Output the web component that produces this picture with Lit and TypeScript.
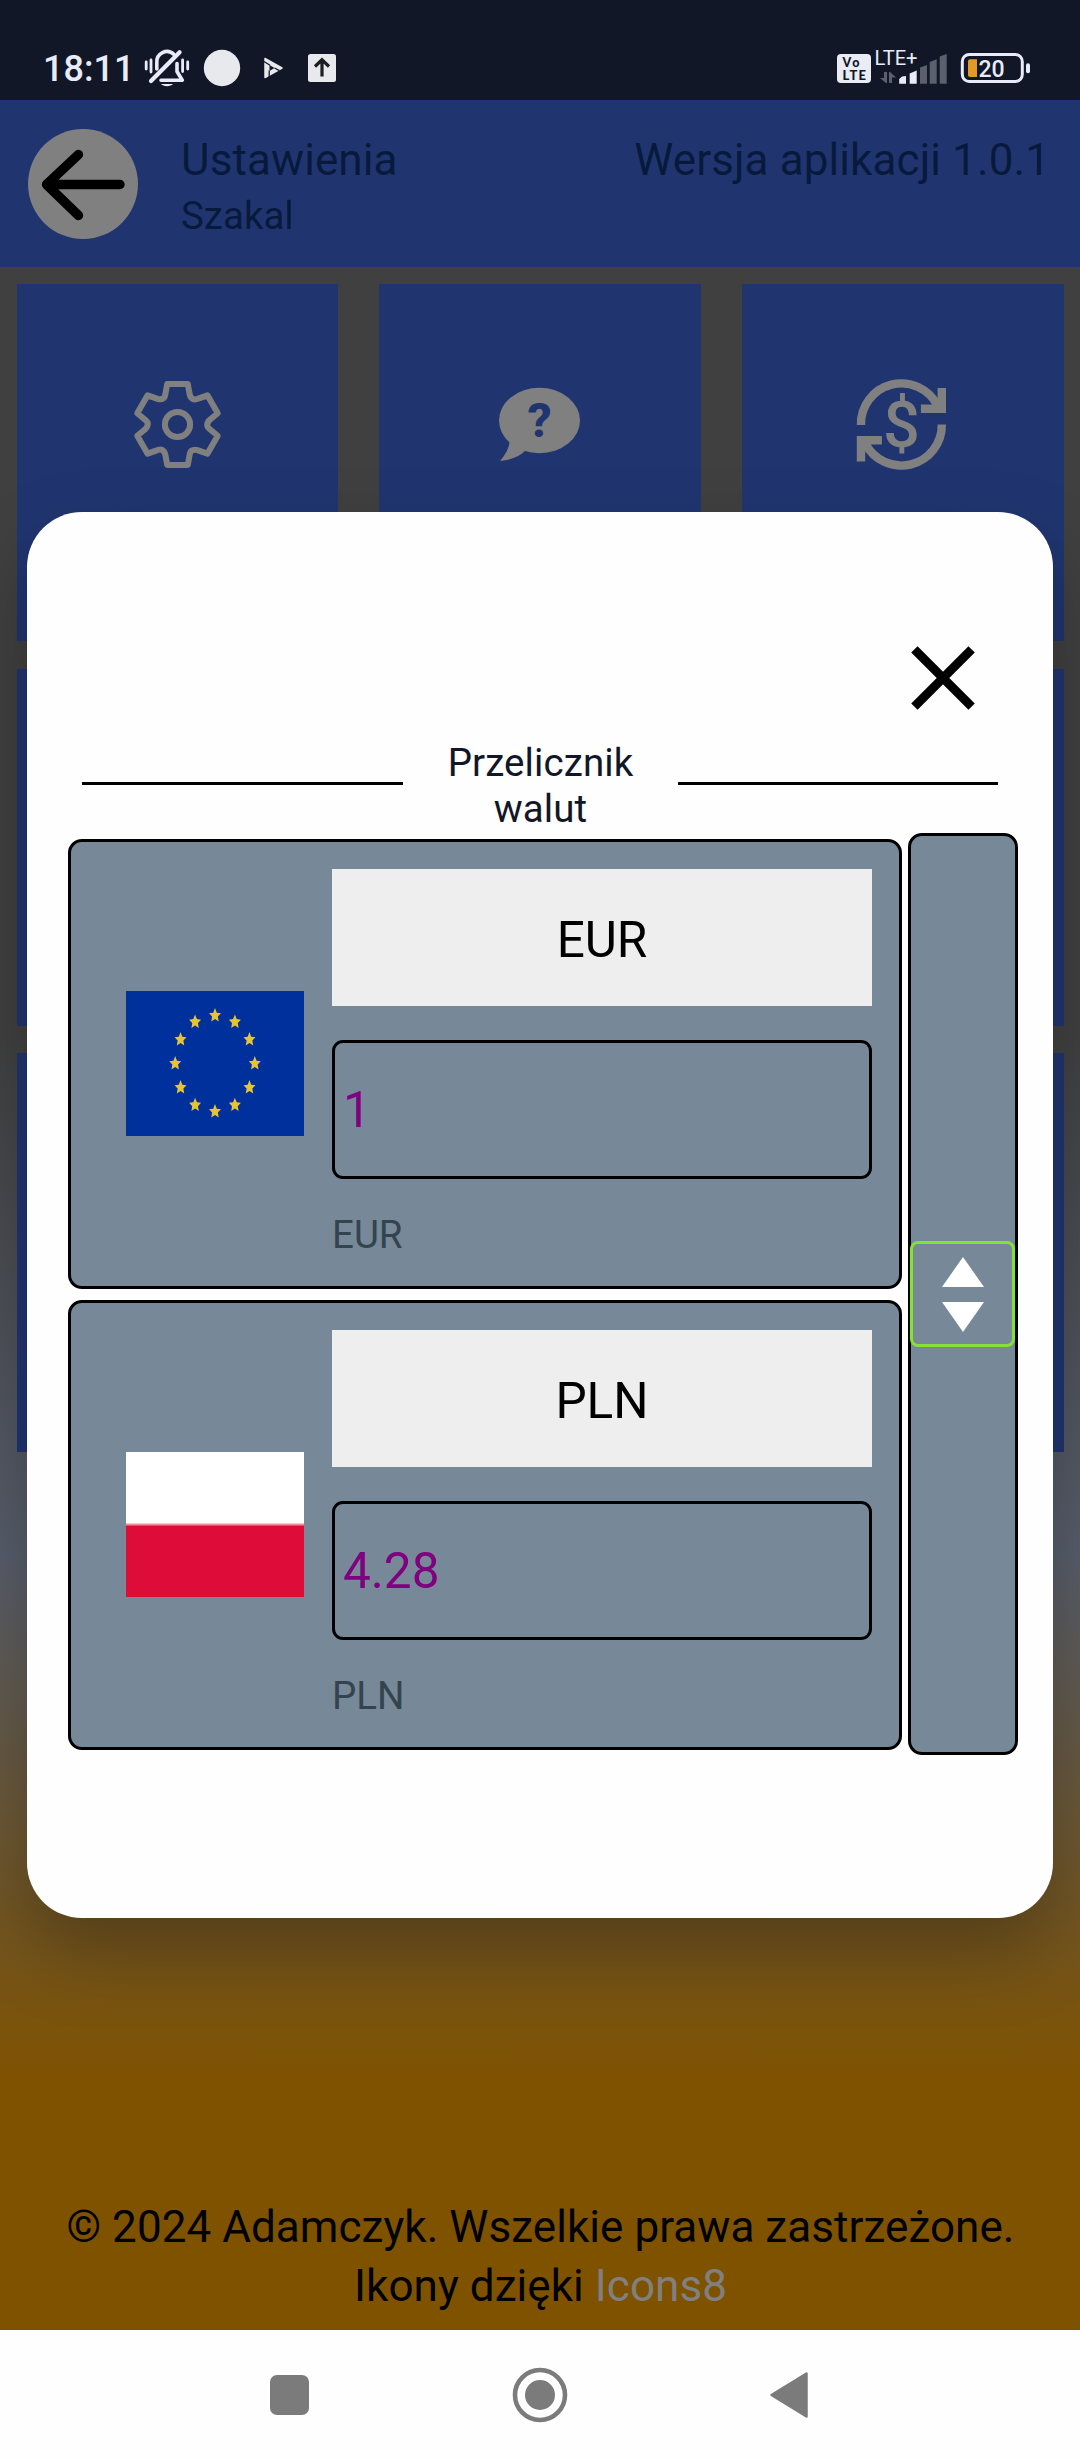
import { LitElement, html, svg, css } from "lit";
import { customElement, property } from "lit/decorators.js";

const star = (cx: number, cy: number, rx: number, ry: number) => {
  const pts: string[] = [];
  for (let i = 0; i < 10; i++) {
    const a = (-90 + i * 36) * (Math.PI / 180);
    const k = i % 2 ? 0.48 : 1;
    pts.push(`${(cx + Math.cos(a) * rx * k).toFixed(2)},${(cy + Math.sin(a) * ry * k).toFixed(2)}`);
  }
  return svg`<polygon points=${pts.join(" ")} fill="#e6c434"></polygon>`;
};

const flags: Record<string, unknown> = {
  EUR: html`<svg class="flag" viewBox="0 0 178 145">
    <rect width="178" height="145" fill="#00309b"></rect>
    ${Array.from({ length: 12 }, (_, i) => {
      const a = (i * 30 * Math.PI) / 180;
      return star(89 + Math.sin(a) * 39.8, 72.5 - Math.cos(a) * 48, 6.3, 7.4);
    })}
  </svg>`,
  PLN: html`<svg class="flag" viewBox="0 0 178 145">
    <rect width="178" height="145" fill="#fff"></rect>
    <rect y="71.5" width="178" height="3" fill="#f0909f"></rect>
    <rect y="73.5" width="178" height="71.5" fill="#dd0c39"></rect>
  </svg>`,
};

@customElement("currency-card")
class CurrencyCard extends LitElement {
  @property() code = "";
  @property() amount = "";

  static styles = css`
    :host {
      box-sizing: border-box;
      display: flex;
      align-items: center;
      gap: 28px;
      height: 450px;
      padding: 0 27px 0 55px;
      border: 3px solid #000;
      border-radius: 14px;
      background: #778899;
    }
    .flag {
      display: block;
      width: 178px;
      height: 145px;
      margin-bottom: 1px;
      flex: none;
    }
    .fields {
      flex: 1;
      height: 390px;
      display: flex;
      flex-direction: column;
    }
    .select {
      box-sizing: border-box;
      height: 137px;
      padding-top: 5px;
      background: #eeeeee;
      color: #000;
      font-size: 49.5px;
      display: flex;
      align-items: center;
      justify-content: center;
    }
    .amount {
      box-sizing: border-box;
      height: 139px;
      margin-top: 34px;
      padding-left: 8px;
      border: 3px solid #000;
      border-radius: 11px;
      color: #800080;
      font-size: 49.5px;
      display: flex;
      align-items: center;
    }
    .caption {
      margin-top: 33px;
      font-size: 38.5px;
      line-height: 46px;
      color: #34444f;
    }
  `;

  render() {
    return html`${flags[this.code]}
      <div class="fields">
        <div class="select">${this.code}</div>
        <div class="amount">${this.amount}</div>
        <div class="caption">${this.code}</div>
      </div>`;
  }
}

const gearTooth = [0, 60, 120, 180, 240, 300]
  .map((deg, i) => {
    const a = (deg * Math.PI) / 180;
    const p = (x: number, y: number) =>
      `${(x * Math.cos(a) - y * Math.sin(a)).toFixed(2)} ${(x * Math.sin(a) + y * Math.cos(a)).toFixed(2)}`;
    return `${i ? "Q" + p(-13, -26.5) + " " : "M"}${p(-12.2, -30)}L${p(-10.3, -40.5)}L${p(10.3, -40.5)}L${p(12.2, -30)}Q${p(13, -26.5)} ${p(16.2, -25)}`;
  })
  .join("");

const tileIcons = [
  svg`<g transform="translate(160.5 140.5)" fill="none" stroke="#808080" stroke-width="6" stroke-linejoin="round">
      <path d="${gearTooth}Q-13 -26.5 -12.2 -30Z"></path><circle r="12.6"></circle></g>`,
  svg`<g fill="#808080"><ellipse cx="160.5" cy="136.5" rx="40.5" ry="32.7"></ellipse>
      <path d="M131 156C130 165 126 171 121 177C133 176 141 172 147 166Z"></path></g>
      <text x="160.5" y="153" text-anchor="middle" font-size="48" font-weight="800" fill="#203570">?</text>`,
  svg`<g transform="translate(159.4 140.5)" fill="none" stroke="#808080" stroke-width="8.4">
      <path d="M-40.4 .5A40.4 40.4 0 0 1 36 -19M40.4 0A40.4 40.4 0 0 1 -36 19"></path>
      <path d="M40.4 -36.5V-15.7H19.5M-40.4 37V15.7H-19.5"></path>
      <text x="0" y="22.5" text-anchor="middle" font-size="65" font-weight="500" fill="#808080" stroke="none">$</text></g>`,
];

@customElement("app-root")
class AppRoot extends LitElement {
  static styles = css`
    :host {
      display: block;
      font-family: Roboto, "Noto Sans", sans-serif;
    }
    svg {
      display: block;
      flex: none;
      overflow: visible;
    }
    .screen {
      position: relative;
      width: 1080px;
      height: 2460px;
      overflow: hidden;
      display: flex;
      flex-direction: column;
      background: #fefefe;
    }
    .status {
      box-sizing: border-box;
      height: 100px;
      padding: 36px 50px 0 43px;
      display: flex;
      align-items: center;
      background: #111726;
      color: #e9ecf8;
    }
    .clock {
      width: 101px;
      padding-top: 1px;
      font-size: 36px;
      font-weight: 500;
      line-height: 42px;
      white-space: nowrap;
    }
    .status-right {
      margin-left: auto;
    }
    .header {
      box-sizing: border-box;
      height: 167px;
      padding: 29px 30px 0 28px;
      display: flex;
      align-items: flex-start;
      background: #203570;
      color: #081a3c;
    }
    .titles {
      margin: 5px auto 0 43px;
    }
    .title {
      font-size: 44px;
      line-height: 52px;
      letter-spacing: 0.1px;
      white-space: nowrap;
    }
    .version {
      margin-top: 5px;
    }
    .subtitle {
      margin-top: 7px;
      font-size: 38.5px;
      line-height: 46px;
    }
    .body {
      box-sizing: border-box;
      height: 2063px;
      padding: 17px 16px 14px 17px;
      display: flex;
      flex-direction: column;
      background: linear-gradient(#404040 0, #404040 760px, #585e6c 1290px, #7f5200 1815px);
    }
    .tiles {
      display: grid;
      grid-template-columns: 321px 322px 322px;
      grid-template-rows: 357px 357px 399px;
      column-gap: 41px;
      row-gap: 27.5px;
    }
    .tile {
      background: #203570;
    }
    .footer {
      margin-top: auto;
      text-align: center;
      font-size: 44px;
      line-height: 59px;
      letter-spacing: 0.06px;
      color: #000;
    }
    .link {
      color: #808080;
    }
    .nav {
      height: 130px;
      padding: 0 272px 0 270px;
      display: flex;
      align-items: center;
      justify-content: space-between;
    }
    .modal {
      position: absolute;
      left: 27px;
      top: 512px;
      width: 1026px;
      height: 1406px;
      box-sizing: border-box;
      padding-top: 134px;
      border-radius: 55px;
      background: #fefefe;
      box-shadow: 0 34px 76px rgba(0, 0, 0, 0.27);
      display: flex;
      flex-direction: column;
    }
    .close {
      align-self: flex-end;
      margin-right: 78px;
    }
    .heading {
      margin: 30px 55px 0;
      height: 92px;
      display: flex;
    }
    .rule {
      width: 321px;
      height: 3px;
      margin-top: 42px;
      background: #000;
    }
    .rule.end {
      width: 320px;
    }
    .heading-text {
      flex: 1;
      padding: 0 30px;
      text-align: center;
      font-size: 38.5px;
      line-height: 46px;
      letter-spacing: 0.08px;
      color: #111726;
    }
    .converter {
      display: flex;
      gap: 6px;
      margin: 1px 35px 0 41px;
    }
    .cards {
      width: 834px;
      margin-top: 6px;
      display: flex;
      flex-direction: column;
      gap: 11px;
    }
    .side {
      box-sizing: border-box;
      width: 110px;
      height: 922px;
      border: 3px solid #000;
      border-radius: 14px;
      background: #778899;
      display: flex;
      align-items: center;
    }
    .swap {
      box-sizing: border-box;
      flex: none;
      width: 105px;
      height: 106px;
      margin-left: -1px;
      border: 3px solid #84e136;
      border-radius: 8px;
      background: #778899;
      display: flex;
      flex-direction: column;
      align-items: center;
      justify-content: center;
      gap: 15px;
    }
  `;

  render() {
    return html`
      <div class="screen">
        <div class="status">
          <div class="clock">18:11</div>
          <svg width="185" height="38" viewBox="0 0 185 38">
            <g transform="translate(0 1)">
              <g fill="none" stroke="#e9ecf8" stroke-width="3.6" stroke-linecap="round" stroke-linejoin="round">
                <path d="M12.8 19V13A10.2 10.4 0 0 1 30 4.5M33 13.5V21.5L38.3 30.3H17"></path>
                <path d="M35.6 2.2L7 31" stroke-width="4.2"></path>
                <path d="M2.2 12V19M7 10V22M38.6 10V21.5M43.7 12V19" stroke-width="2.8"></path>
                <path d="M17 34H29A7 4.5 0 0 1 17 34Z" fill="#e9ecf8" stroke="none"></path>
              </g>
              <circle cx="78" cy="18" r="18.2" fill="#e8e9ec"></circle>
              <path d="M121 8.5L138 18L121 27.5Z" fill="#e8e9ec" stroke="#e8e9ec" stroke-width="1.5" stroke-linejoin="round"></path>
              <path d="M125.5 15L130.5 18L125.5 21Z" fill="#111726"></path>
              <path d="M120 11.5L126 15.2M130.5 18L135.5 20.6M125.2 20.5V27" fill="none" stroke="#111726" stroke-width="1.3"></path>
              <rect x="164" y="4" width="28" height="28" rx="2.5" fill="#e8e9ec"></rect>
              <path d="M178 26.5V10M171 16.5L178 9.8L185 16.5" fill="none" stroke="#1a1d24" stroke-width="3.2"></path>
            </g>
          </svg>
          <svg class="status-right" width="194" height="36" viewBox="0 0 194 36">
            <rect x="1" y="4" width="34" height="29" rx="4" fill="#e9ecf5"></rect>
            <g fill="#111726" font-family="Lato, sans-serif" font-weight="900">
              <text x="6.5" y="17" font-size="12.5" textLength="17">Vo</text>
              <text x="6.5" y="29.6" font-size="13" textLength="23.5">LTE</text>
            </g>
            <text x="38.5" y="15" font-size="21" textLength="43" lengthAdjust="spacingAndGlyphs" fill="#e9ecf8">LTE+</text>
            <g fill="#5b606c">
              <path d="M48 22H51V33H50L44 28H48ZM53 33H56V27.5H60L54 22H53Z"></path>
              <path d="M84 17.5L91 15V33.7H84ZM93.7 12L100.7 9.2V33.7H93.7ZM103.7 6.5L110.7 4V33.7H103.7Z"></path>
            </g>
            <path d="M63.2 29L66 26.5L70 26V33.7H63.2ZM73.7 23.5L80.7 20.5V33.7H73.7Z" fill="#e9ecf8"></path>
            <rect x="126.3" y="4.5" width="60" height="27" rx="7" fill="none" stroke="#e9ecf8" stroke-width="3"></rect>
            <path d="M134 9.3H141V27H134Q132 27 132 25V11.3Q132 9.3 134 9.3Z" fill="#e39b26"></path>
            <text x="142.6" y="27" font-size="23" font-weight="500" textLength="26" fill="#e9ecf8">20</text>
            <rect x="190" y="13.3" width="4" height="10" rx="2" fill="#e9ecf8"></rect>
          </svg>
        </div>

        <div class="header">
          <svg width="110" height="110" viewBox="0 0 110 110">
            <circle cx="55" cy="55" r="55" fill="#808080"></circle>
            <path d="M92 55.5H18.5M50.5 25.5L18.5 55.5L50.5 86.5" fill="none" stroke="#000" stroke-width="9.4" stroke-linecap="round" stroke-linejoin="round"></path>
          </svg>
          <div class="titles">
            <div class="title">Ustawienia</div>
            <div class="subtitle">Szakal</div>
          </div>
          <div class="title version">Wersja aplikacji 1.0.1</div>
        </div>

        <div class="body">
          <div class="tiles">
            ${Array.from(
              { length: 9 },
              (_, i) => html`<div class="tile">
                ${tileIcons[i] ? html`<svg width="321" height="281" viewBox="0 0 321 281">${tileIcons[i]}</svg>` : null}
              </div>`
            )}
          </div>
          <div class="footer">
            <div>© 2024 Adamczyk. Wszelkie prawa zastrzeżone.</div>
            <div>Ikony dzięki <span class="link">Icons8</span></div>
          </div>
        </div>

        <div class="nav">
          <svg width="39" height="40" viewBox="0 0 39 40"><rect width="39" height="40" rx="7" fill="#7b7b7b"></rect></svg>
          <svg width="56" height="56" viewBox="0 0 56 56">
            <circle cx="28" cy="28" r="25" fill="none" stroke="#7b7b7b" stroke-width="4.6"></circle>
            <circle cx="28" cy="28" r="15" fill="#7b7b7b"></circle>
          </svg>
          <svg width="38" height="46" viewBox="0 0 38 46">
            <path d="M36.5 1.5V44.5L1.5 23Z" fill="#7b7b7b" stroke="#7b7b7b" stroke-width="2.5" stroke-linejoin="round"></path>
          </svg>
        </div>

        <div class="modal">
          <svg class="close" width="64" height="64" viewBox="0 0 64 64">
            <path d="M3.4 3.4L60.6 60.6M60.6 3.4L3.4 60.6" stroke="#000" stroke-width="9"></path>
          </svg>
          <div class="heading">
            <div class="rule"></div>
            <div class="heading-text">Przelicznik walut</div>
            <div class="rule end"></div>
          </div>
          <div class="converter">
            <div class="cards">
              <currency-card code="EUR" amount="1"></currency-card>
              <currency-card code="PLN" amount="4.28"></currency-card>
            </div>
            <div class="side">
              <div class="swap">
                <svg width="42" height="30" viewBox="0 0 42 30"><path d="M21 0L42 30H0Z" fill="#fff"></path></svg>
                <svg width="42" height="30" viewBox="0 0 42 30"><path d="M21 30L42 0H0Z" fill="#fff"></path></svg>
              </div>
            </div>
          </div>
        </div>
      </div>
    `;
  }
}
